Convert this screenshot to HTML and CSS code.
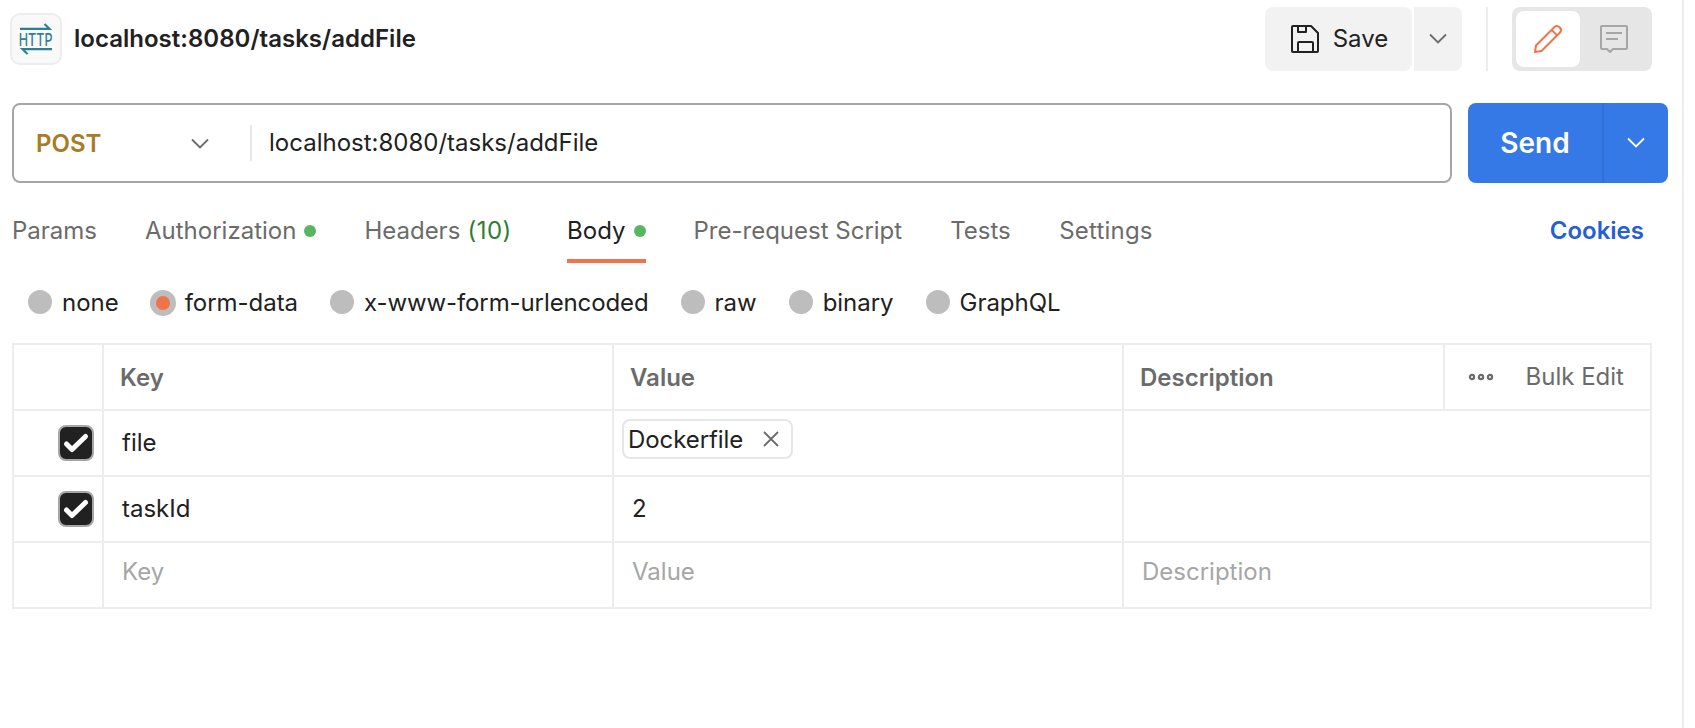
FILE: index.html
```html
<!DOCTYPE html>
<html lang="en">
<head>
<meta charset="utf-8">
<title>localhost:8080/tasks/addFile</title>
<link rel="stylesheet" href="styles.css">
</head>
<body>
<main class="panel">
  <header class="topbar">
    <div class="http-badge">
      <svg width="48" height="48" viewBox="0 0 48 48">
        <path d="M8 13.8H37.5L32.5 9M40 34.2H10.5L15.5 39" fill="none" stroke="#2f7f92" stroke-width="2.2"/>
        <text class="http-text" x="6.8" y="30.8" textLength="33.6" lengthAdjust="spacingAndGlyphs">HTTP</text>
      </svg>
    </div>
    <h1 class="title">localhost:8080/tasks/addFile</h1>
    <div class="save-group">
      <button class="save">
        <svg width="28" height="28" viewBox="0 0 28 28" fill="none" stroke="#212121" stroke-width="2" stroke-linejoin="round"><path d="M2 1H20L27 8V26Q27 27 26 27H2Q1 27 1 26V2Q1 1 2 1ZM7 1V7H15V1M7 27V18Q7 17 8 17H21Q22 17 22 18V27"/></svg>
        <span>Save</span>
      </button>
      <button class="save-more"><svg width="18" height="12" viewBox="0 0 18 12" fill="none" stroke="#6b6b6b" stroke-width="1.8"><path d="M1 1.5L9 9.5L17 1.5"/></svg></button>
    </div>
    <span class="top-divider"></span>
    <div class="toggle">
      <button class="toggle-item active"><svg width="30" height="30" viewBox="0 0 30 30" fill="none" stroke="#f0734a" stroke-width="2" stroke-linejoin="round"><path d="M2 28L3 21.5L21.5 3Q24 .8 26.7 3.3Q29.2 6 27 8.5L8.5 27ZM18.6 5.9L24.1 11.4"/></svg></button>
      <button class="toggle-item"><svg width="28" height="28" viewBox="0 0 28 28" fill="none" stroke="#a6a6a6" stroke-width="2" stroke-linejoin="round"><path d="M2 1H26Q27 1 27 2V23Q27 24 26 24H13L10 27L7 24H2Q1 24 1 23V2Q1 1 2 1ZM6 8H22M6 14H18"/></svg></button>
    </div>
  </header>

  <section class="request">
    <div class="url-box">
      <div class="method"><span>POST</span><svg width="18" height="12" viewBox="0 0 18 12" fill="none" stroke="#6b6b6b" stroke-width="1.8"><path d="M1 1.5L9 9.5L17 1.5"/></svg></div>
      <span class="url">localhost:8080/tasks/addFile</span>
    </div>
    <div class="send-group">
      <button class="send">Send</button>
      <button class="send-more"><svg width="18" height="12" viewBox="0 0 18 12" fill="none" stroke="#fff" stroke-width="1.8"><path d="M1 1.5L9 9.5L17 1.5"/></svg></button>
    </div>
  </section>

  <nav class="tabs">
    <a class="tab">Params</a>
    <a class="tab">Authorization<i class="dot"></i></a>
    <a class="tab headers">Headers <span class="count">(10)</span></a>
    <a class="tab active">Body<i class="dot"></i></a>
    <a class="tab script">Pre-request Script</a>
    <a class="tab">Tests</a>
    <a class="tab settings">Settings</a>
    <a class="cookies">Cookies</a>
  </nav>

  <div class="modes">
    <label class="mode none"><i class="radio"></i>none</label>
    <label class="mode"><i class="radio checked"></i>form-data</label>
    <label class="mode encoded"><i class="radio"></i>x-www-form-urlencoded</label>
    <label class="mode"><i class="radio"></i>raw</label>
    <label class="mode"><i class="radio"></i>binary</label>
    <label class="mode"><i class="radio"></i>GraphQL</label>
  </div>

  <div class="table">
    <div class="row head">
      <div class="cell"></div>
      <div class="cell">Key</div>
      <div class="cell">Value</div>
      <div class="cell">Description</div>
      <div class="cell actions">
        <svg width="26" height="8" viewBox="0 0 26 8" fill="none" stroke="#6b6b6b" stroke-width="2.2"><circle cx="4" cy="4" r="2.1"/><circle cx="13" cy="4" r="2.1"/><circle cx="22" cy="4" r="2.1"/></svg>
        <span>Bulk Edit</span>
      </div>
    </div>
    <div class="row">
      <div class="cell check"><span class="checkbox"><svg width="32" height="32" viewBox="0 0 32 32" fill="none" stroke="#fff" stroke-width="5" stroke-linecap="round" stroke-linejoin="round"><path d="M6.5 17L12 22.5L25.5 9.5"/></svg></span></div>
      <div class="cell">file</div>
      <div class="cell file"><span class="chip"><span class="chip-name">Dockerfile</span><svg width="16" height="16" viewBox="0 0 16 16" fill="none" stroke="#6b6b6b" stroke-width="1.8"><path d="M1 1L15 15M15 1L1 15"/></svg></span></div>
      <div class="cell"></div>
    </div>
    <div class="row">
      <div class="cell check"><span class="checkbox"><svg width="32" height="32" viewBox="0 0 32 32" fill="none" stroke="#fff" stroke-width="5" stroke-linecap="round" stroke-linejoin="round"><path d="M6.5 17L12 22.5L25.5 9.5"/></svg></span></div>
      <div class="cell">taskId</div>
      <div class="cell">2</div>
      <div class="cell"></div>
    </div>
    <div class="row placeholder">
      <div class="cell"></div>
      <div class="cell">Key</div>
      <div class="cell">Value</div>
      <div class="cell">Description</div>
    </div>
  </div>
</main>
</body>
</html>
```
FILE: styles.css
```css
* { box-sizing: border-box; }
body { margin: 0; background: #fff; color: #212121; font: 24px/32px Inter, sans-serif; overflow: hidden; }
button { border: 0; padding: 0; margin: 0; font: inherit; color: inherit; background: none; display: flex; align-items: center; justify-content: center; }
svg { display: block; flex: none; overflow: visible; }

.panel { width: 1684px; height: 728px; border-right: 2px solid #ededed; padding: 7px 0 0 10px; }

.topbar { display: flex; align-items: center; height: 64px; }
.http-badge { width: 52px; height: 52px; border: 2px solid #ededed; border-radius: 10px; background: #f9f9f9; }
.http-text { font: 500 17.5px Inter, sans-serif; fill: #2f7f92; }
.title { margin: 0 0 0 12px; font-size: 24px; font-weight: 600; line-height: 32px; width: 1191px; letter-spacing: 0.02px; }
.save-group { display: flex; gap: 2px; height: 64px; }
.save { width: 147px; background: #f2f2f2; border-radius: 8px; gap: 14px; padding-left: 2px; }
.save-more { width: 48px; background: #f2f2f2; border-radius: 0 8px 8px 0; }
.top-divider { width: 2px; height: 64px; background: #ededed; margin: 0 24px; }
.toggle { width: 140px; height: 64px; background: #e6e6e6; border-radius: 8px; padding: 4px; display: flex; gap: 2px; }
.toggle-item { width: 64px; height: 56px; border-radius: 8px; }
.toggle-item.active { background: #fff; }

.request { display: flex; gap: 16px; height: 80px; margin: 32px 0 0 2px; }
.url-box { width: 1440px; border: 2px solid #a6a6a6; border-radius: 8px; display: flex; align-items: center; }
.method { width: 238px; height: 36px; border-right: 2px solid #e6e6e6; padding: 2px 41px 0 22px; display: flex; align-items: center; justify-content: space-between; color: #a87b25; font-weight: 600; }
.url { margin-left: 17px; }
.send-group { display: flex; width: 200px; background: #3579e6; border-radius: 8px; color: #fff; }
.send { width: 134px; font-size: 28px; font-weight: 600; }
.send-more { width: 66px; border-left: 2px solid #2f6fd6; }

.tabs { display: flex; margin: 27px 0 0 2px; height: 53px; color: #6b6b6b; line-height: 40px; }
.tab { display: flex; align-items: center; height: 53px; padding-bottom: 11px; margin-right: 48px; white-space: pre; }
.headers { margin-right: 55.5px; }
.script { letter-spacing: 0; }
.settings { letter-spacing: 0.2px; margin-left: 0.5px; }
.dot { width: 12px; height: 12px; border-radius: 50%; background: #56b75f; margin-left: 8px; }
.count { color: #2e7d32; letter-spacing: 0.4px; margin-left: 0.5px; }
.tab.active { color: #212121; border-bottom: 4px solid #f0734a; padding-bottom: 7px; }
.cookies { color: #265fd0; font-weight: 600; margin-left: auto; margin-right: 38px; padding-top: 1px; }

.modes { display: flex; align-items: center; margin: 23px 0 0 18px; height: 34px; }
.mode { display: flex; align-items: center; gap: 10px; margin-right: 32px; letter-spacing: -0.03px; }
.none { margin-right: 31px; }
.encoded { letter-spacing: -0.1px; }
.radio { width: 24px; height: 24px; border-radius: 50%; background: #bdbdbd; margin-bottom: 2px; }
.radio.checked { width: 26px; height: 26px; border: 6px solid #bdbdbd; background: #f0734a; margin: 0 -1px 0 0; }

.table { width: 1640px; margin: 23px 0 0 2px; border: 2px solid #ededed; border-bottom: 0; }
.row { display: grid; grid-template-columns: 90px 510px 510px 1fr; height: 66px; border-bottom: 2px solid #ededed; }
.cell { border-right: 2px solid #ededed; padding-left: 18px; display: flex; align-items: center; }
.cell:last-child { border-right: 0; }
.head { grid-template-columns: 90px 510px 510px 321px 1fr; color: #6b6b6b; font-weight: 600; }
.head .cell { padding-left: 16px; padding-top: 2px; }
.head .actions { padding: 0 0 0 23px; gap: 31.5px; font-weight: 400; }
.check { padding-left: 44px; }
.checkbox { width: 36px; height: 36px; border: 2px solid #a6a6a6; border-radius: 8px; background: #212121; }
.file { padding: 8px 0 0 8px; align-items: flex-start; }
.chip { display: flex; align-items: center; height: 40px; width: 171px; border: 2px solid #e6e6e6; border-radius: 8px; padding: 0 12px 0 4px; justify-content: space-between; }
.chip-name { padding-top: 2px; letter-spacing: -0.08px; }
.placeholder { color: #a6a6a6; }
.placeholder .cell { padding-bottom: 6px; }
```
